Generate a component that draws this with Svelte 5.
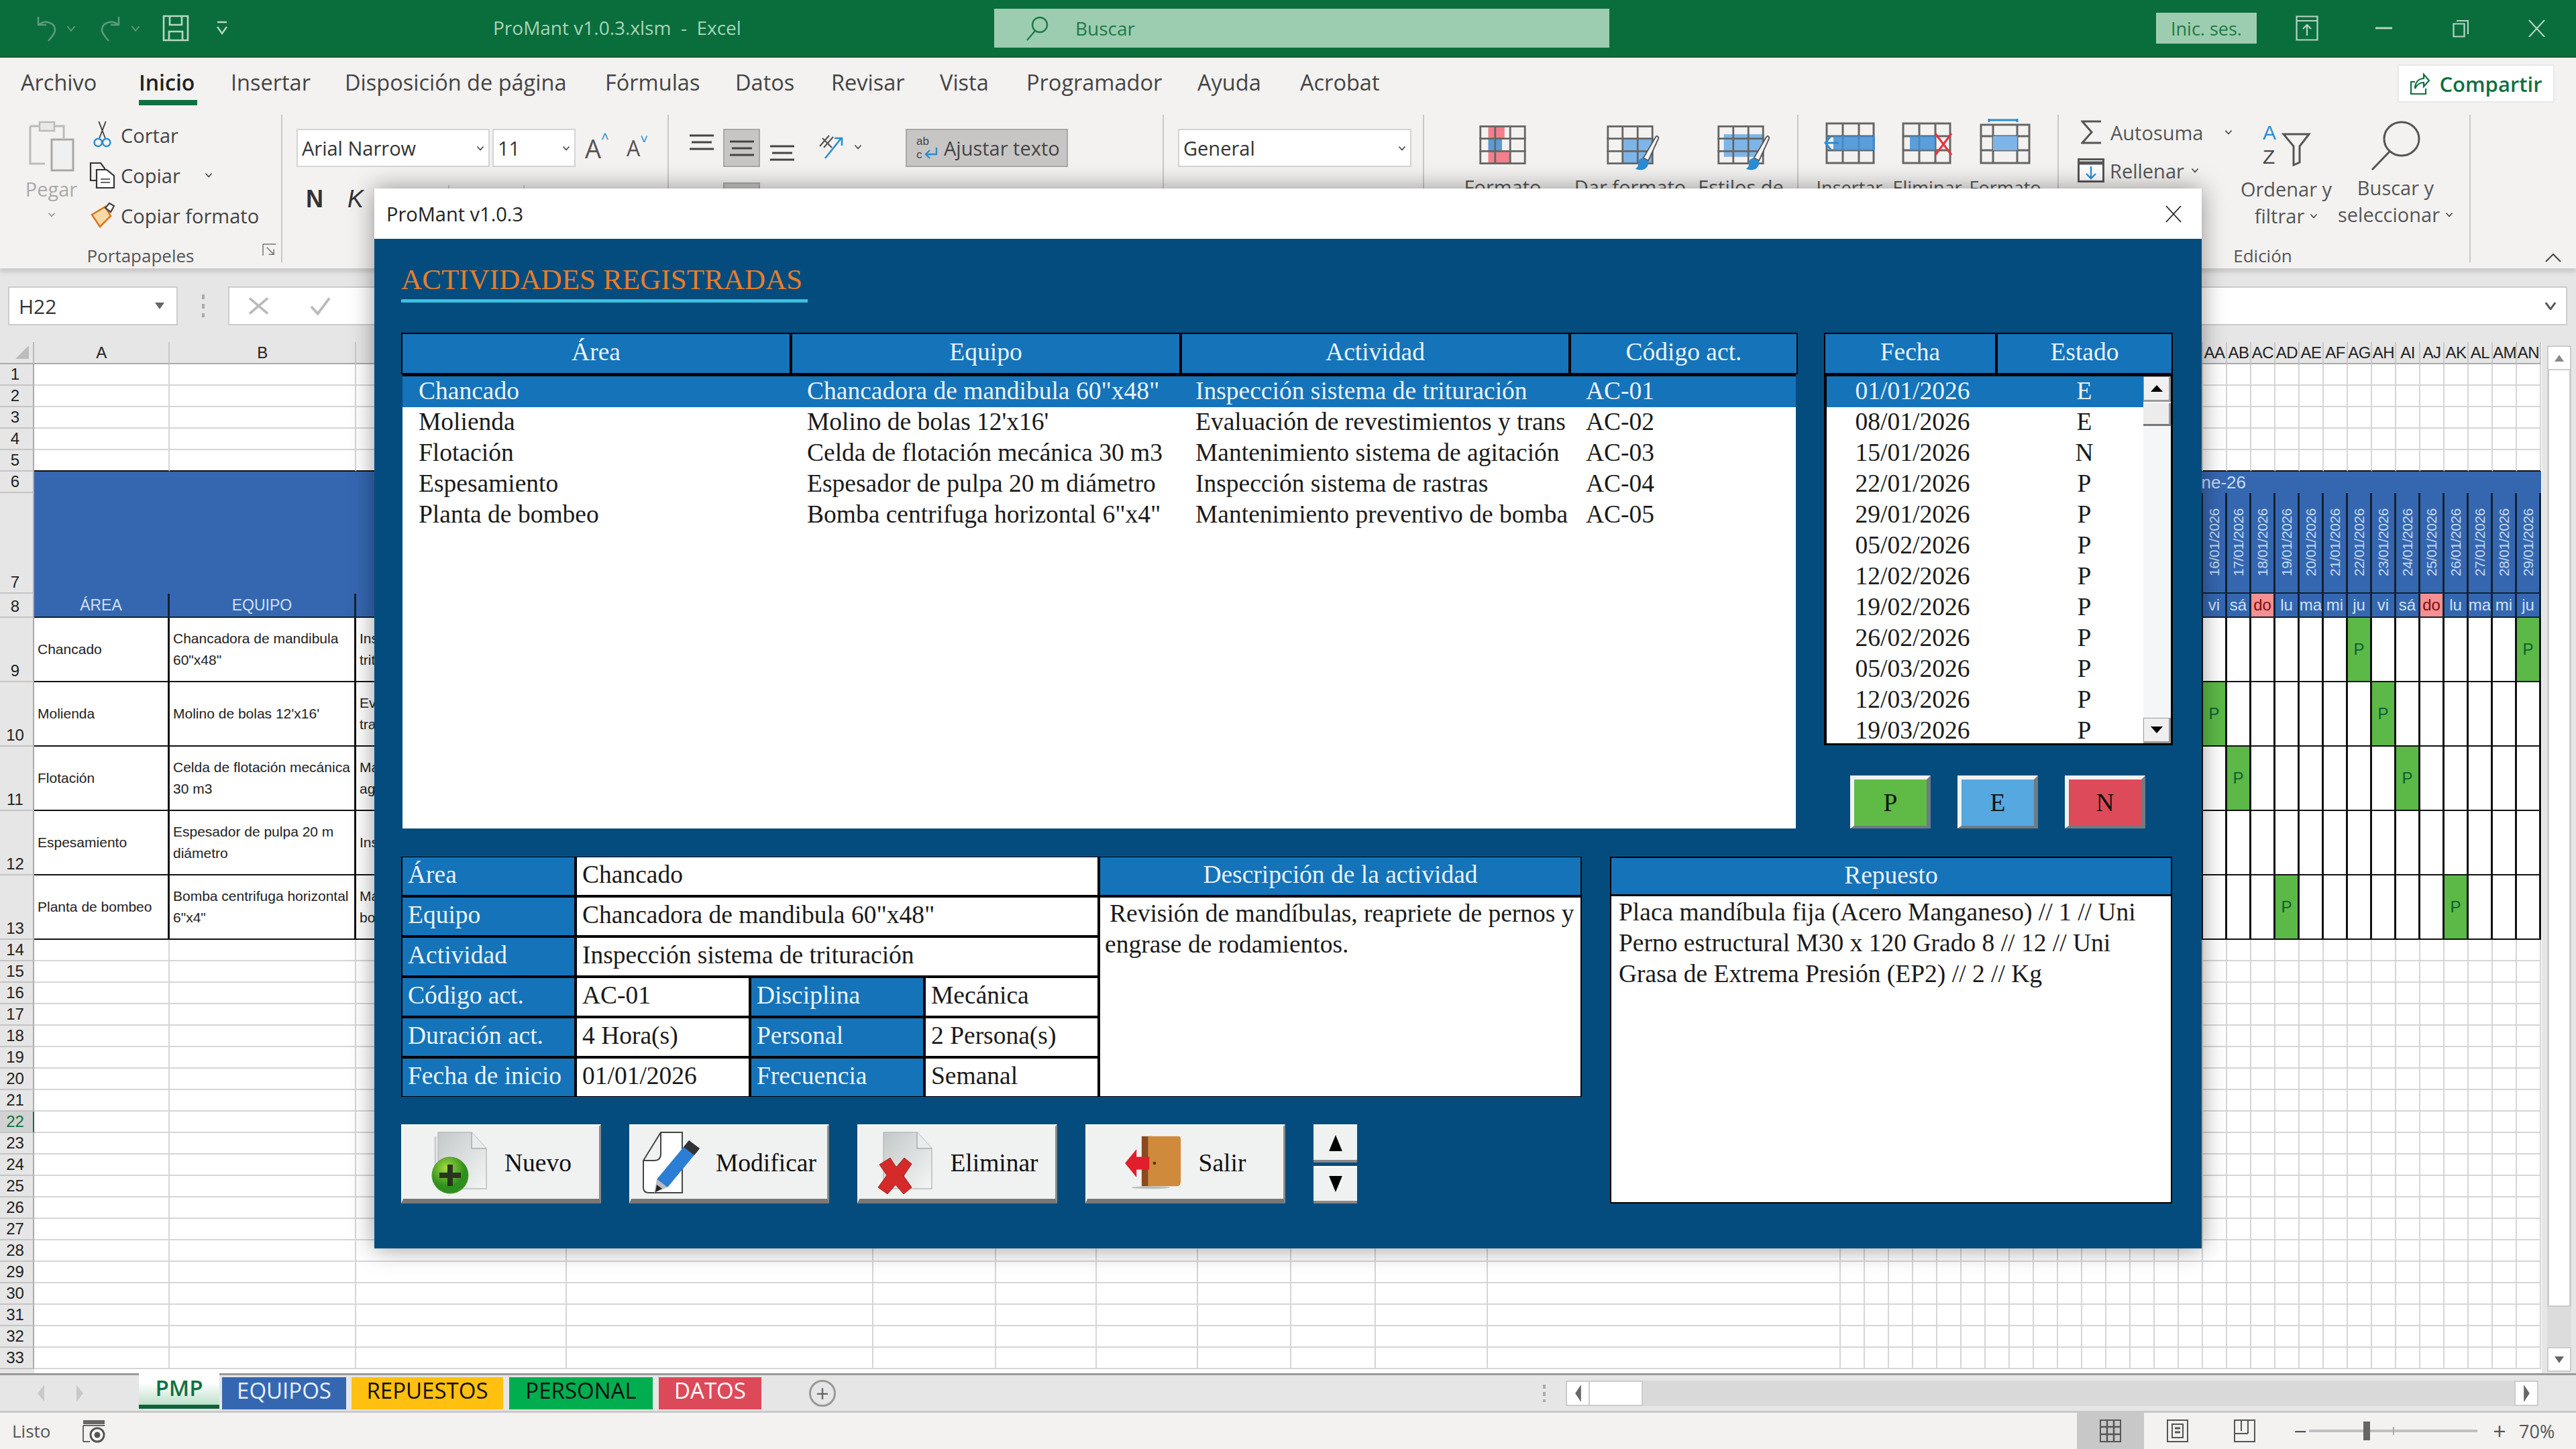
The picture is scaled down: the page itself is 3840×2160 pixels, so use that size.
<script>
  const cols = [202,278,314,457,183,150,151,139,126,167,526,...Array(29).fill(36)];
  const letters = ['A','B','C','D','E','F','G','H','I','J','K','L','M','N','O','P','Q','R','S','T','U','V','W','X','Y','Z','AA','AB','AC','AD','AE','AF','AG','AH','AI','AJ','AK','AL','AM','AN'];
  const rowH = r => r===7?150 : r===8?36 : (r>=9&&r<=13)?96 : r===34?6 : 32;
  const rows = Array.from({length:34},(_,i)=>i+1);
  const dayNames=['do','lu','ma','mi','ju','vi','sá'];
  const dates = Array.from({length:29},(_,i)=>{const d=new Date(2026,0,1+i);return {label:String(d.getDate()).padStart(2,'0')+'/01/2026',day:dayNames[d.getDay()]}});
  const tableData = [
    ['Chancado','Chancadora de mandibula 60"x48"','Inspección sistema de trituración'],
    ['Molienda',"Molino de bolas 12'x16'",'Evaluación de revestimientos y transmisión'],
    ['Flotación','Celda de flotación mecánica 30 m3','Mantenimiento sistema de agitación'],
    ['Espesamiento','Espesador de pulpa 20 m diámetro','Inspección sistema de rastras'],
    ['Planta de bombeo','Bomba centrifuga horizontal 6"x4"','Mantenimiento preventivo de bomba']
  ];
  const marks = {'9-32':'P','9-39':'P','10-26':'P','10-33':'P','11-27':'P','11-34':'P','13-29':'P','13-36':'P','9-25':'N'};
  const gridCols = '51px '+cols.map(c=>c+'px').join(' ');
  const gridRows = '33px '+rows.map(r=>rowH(r)+'px').join(' ');
  const visible = c => c<3 || c>=26;
  function cellClass(r,c){
    let k='cell';
    if(r>=6&&r<=8) k+=' blue';
    if(r===6) k+=' merged';
    if(r===7&&c<11) k+=' merged';
    if(r===7&&c>=11) k+=' dark';
    if(r===8) k+=' dark';
    if(r>=9&&r<=13) k+=' dark';
    if(r===5) k+=' bdark';
    if(r===13) k+=' bdark';
    if(r===34) k+=' nob';
    const m=marks[r+'-'+c];
    if(m==='P') k+=' p';
    if(m==='N') k+=' n';
    if(r===8&&c>=11&&dates[c-11].day==='do') k+=' sun';
    return k;
  }
  const mainRows = [
    ['Chancado','Chancadora de mandibula 60"x48"','Inspección sistema de trituración','AC-01'],
    ['Molienda',"Molino de bolas 12'x16'",'Evaluación de revestimientos y trans','AC-02'],
    ['Flotación','Celda de flotación mecánica 30 m3','Mantenimiento sistema de agitación','AC-03'],
    ['Espesamiento','Espesador de pulpa 20 m diámetro','Inspección sistema de rastras','AC-04'],
    ['Planta de bombeo','Bomba centrifuga horizontal 6"x4"','Mantenimiento preventivo de bomba','AC-05']
  ];
  const fechas = [['01/01/2026','E'],['08/01/2026','E'],['15/01/2026','N'],['22/01/2026','P'],['29/01/2026','P'],['05/02/2026','P'],['12/02/2026','P'],['19/02/2026','P'],['26/02/2026','P'],['05/03/2026','P'],['12/03/2026','P'],['19/03/2026','P']];
  const menu = [['Archivo',''],['Inicio','on'],['Insertar',''],['Disposición de página',''],['Fórmulas',''],['Datos',''],['Revisar',''],['Vista',''],['Programador',''],['Ayuda',''],['Acrobat','']];
  const sheets = [['PMP','s-pmp'],['EQUIPOS','s-eq'],['REPUESTOS','s-rep'],['PERSONAL','s-per'],['DATOS','s-dat']];
</script>

{#snippet chev()}
  <svg class="chev" viewBox="0 0 12 8"><path d="M1.5 1.5 6 6.5l4.5-5" fill="none" stroke="#444" stroke-width="1.6"/></svg>
{/snippet}

{#snippet tableIcon(kind)}
  <svg class="tblic" viewBox="0 0 74 62">
    {#if kind==='cond'}
      <rect x="14" y="0" width="26" height="22" fill="#f0808c"/><rect x="14" y="40" width="36" height="22" fill="#f0808c"/><rect x="14" y="22" width="22" height="18" fill="#5b9bd5"/>
    {:else if kind==='fmt'}
      <rect x="26" y="20" width="48" height="42" fill="#7db5e8"/>
    {:else if kind==='sty'}
      <rect x="10" y="14" width="64" height="36" fill="#7db5e8"/>
    {/if}
    <g fill="none" stroke="#666" stroke-width="3"><rect x="1.5" y="1.5" width="71" height="59"/><path d="M25 0v62M49 0v62M0 21h74M0 41h74"/></g>
    {#if kind!=='cond'}
      <path d="M78 18c2-2 5 0 4 3L66 56l-8-4z" fill="#f4f4f4" stroke="#555" stroke-width="2"/>
      <path d="M57 52l9 5c1 8-4 14-12 14-5 0-9-2-9-2 4-2 5-5 5-9 0-5 3-8 7-8z" fill="#2a8dd4"/>
    {/if}
  </svg>
{/snippet}

<div class="app">
  <header class="titlebar">
    <svg class="tb-undo" viewBox="0 0 36 40"><path d="M6 3v12h12M7 15c7-7 22-5 24 6 1 6-5 12-10 18" fill="none" stroke="#5d9b7c" stroke-width="2.5"/></svg>
    <svg class="tb-cv" viewBox="0 0 12 8"><path d="M1 1l5 6 5-6" fill="none" stroke="#5d9b7c" stroke-width="1.5"/></svg>
    <svg class="tb-redo" viewBox="0 0 36 40"><path d="M30 3v12H18M29 15c-7-7-22-5-24 6-1 6 5 12 10 18" fill="none" stroke="#5d9b7c" stroke-width="2.5"/></svg>
    <svg class="tb-cv" viewBox="0 0 12 8"><path d="M1 1l5 6 5-6" fill="none" stroke="#5d9b7c" stroke-width="1.5"/></svg>
    <svg class="tb-save" viewBox="0 0 40 40"><path d="M2 2h36v36H2zM11 2v13h18V2M10 38V25h20v13" fill="none" stroke="#b8d6c4" stroke-width="2.6"/></svg>
    <svg class="tb-cust" viewBox="0 0 18 22"><path d="M2 2h14M2 9l7 10 7-10" fill="none" stroke="#b8d6c4" stroke-width="2.4"/></svg>
    <span class="tb-title">ProMant v1.0.3.xlsm  -  Excel</span>
    <div class="search">
      <svg viewBox="0 0 36 38"><circle cx="22" cy="14" r="11" fill="none" stroke="#1e7a48" stroke-width="2.4"/><path d="M15 23 3 37" stroke="#1e7a48" stroke-width="2.4"/></svg>
      <span>Buscar</span>
    </div>
    <div class="signin">Inic. ses.</div>
    <svg class="wc wc1" viewBox="0 0 34 38"><path d="M1.5 1.5h31v35h-31zM1.5 8h31M17 30V14M11 20l6-6 6 6" fill="none" stroke="#b8d6c4" stroke-width="2.2"/></svg>
    <svg class="wc wc2" viewBox="0 0 26 6"><path d="M0 3h26" stroke="#b8d6c4" stroke-width="3"/></svg>
    <svg class="wc wc3" viewBox="0 0 24 28"><path d="M1.5 7.5h16v19h-16zM6 3h17v20" fill="none" stroke="#b8d6c4" stroke-width="2.2"/></svg>
    <svg class="wc wc4" viewBox="0 0 26 28"><path d="M1 1l24 26M25 1 1 27" stroke="#b8d6c4" stroke-width="2.2"/></svg>
  </header>

  <nav class="menu">
    {#each menu as [m,s]}<span class="mi m-{m.slice(0,3).toLowerCase()} {s}">{m}</span>{/each}
    <div class="share">
      <svg viewBox="0 0 30 34"><path d="M8 14H2v18h22v-8M8 24c0-9 5-15 13-15V3l8 9-8 9v-6c-6 0-10 3-13 9z" fill="none" stroke="#107040" stroke-width="2.2"/></svg>
      <span>Compartir</span>
    </div>
  </nav>

  <section class="ribbon">
    <div class="grp g-clip">
      <div class="paste">
        <svg class="pic" viewBox="0 0 68 76"><path d="M2 8h14M38 8h14v18M2 8v56h22" fill="none" stroke="#bbb" stroke-width="3"/><rect x="16" y="2" width="22" height="13" fill="#e8e8e8" stroke="#bbb" stroke-width="2.5"/><rect x="34" y="28" width="32" height="46" fill="#f0f0f0" stroke="#a8a8a8" stroke-width="3"/></svg>
        <span>Pegar</span>
        <svg class="chev" viewBox="0 0 12 8"><path d="M1.5 1.5 6 6.5l4.5-5" fill="none" stroke="#999" stroke-width="1.6"/></svg>
      </div>
      <div class="cliplist">
        <div><svg class="cic" viewBox="0 0 39 42"><path d="M14 0l10 26M25 0 15 26" stroke="#444" stroke-width="2"/><circle cx="13" cy="33" r="6" fill="none" stroke="#2a8dd4" stroke-width="2.6"/><circle cx="26" cy="33" r="6" fill="none" stroke="#2a8dd4" stroke-width="2.6"/></svg><span>Cortar</span></div>
        <div><svg class="cic" viewBox="0 0 39 40"><path d="M10 28H2V2h15l6 8v3" fill="none" stroke="#333" stroke-width="2.2"/><path d="M11 12h15l11 9v18H11z" fill="#fff" stroke="#333" stroke-width="2.2"/><path d="M17 26h14M17 31h14" stroke="#666" stroke-width="2"/></svg><span>Copiar</span>{@render chev()}</div>
        <div><svg class="cic" viewBox="0 0 39 38"><path d="M4 18 24 6l8 14-16 16z" fill="#f8d9a8" stroke="#d9761a" stroke-width="2.6"/><path d="M24 8l6-7 7 4-5 9z" fill="#fff" stroke="#444" stroke-width="2.2"/></svg><span>Copiar formato</span></div>
      </div>
      <div class="grplabel">Portapapeles
        <svg class="launch" viewBox="0 0 22 20"><path d="M1 1h20M1 1v18M7 6l11 11M18 9v8h-8" fill="none" stroke="#777" stroke-width="1.6"/></svg>
      </div>
    </div>

    <div class="grp g-font">
      <div class="fontrow">
        <div class="combo fontname"><span>Arial Narrow</span>{@render chev()}</div>
        <div class="combo fontsize"><span>11</span>{@render chev()}</div>
        <span class="grow">A<sup>˄</sup></span>
        <span class="shrink">A<sup>˅</sup></span>
      </div>
      <div class="fontrow2"><b>N</b><i>K</i><u class="fs1"></u><u class="fs2"></u></div>
    </div>

    <div class="grp g-align">
      <svg class="al al1" viewBox="0 0 36 24"><path d="M0 2h36M3 12h30M0 22h36" stroke="#444" stroke-width="3"/></svg>
      <div class="alcol">
        <div class="al-on"><svg viewBox="0 0 36 24"><path d="M0 2h36M3 12h30M0 22h36" stroke="#444" stroke-width="3"/></svg></div>
        <div class="al-on al-low"></div>
      </div>
      <svg class="al al3" viewBox="0 0 36 24"><path d="M0 2h36M3 12h30M0 22h36" stroke="#444" stroke-width="3"/></svg>
      <svg class="orient" viewBox="0 0 40 38"><path d="M2 18 16 2M8 20 22 4M6 6l14 14" stroke="#555" stroke-width="2.2"/><path d="M10 36 34 6M24 6h11v11" fill="none" stroke="#2a8dd4" stroke-width="2.6"/></svg>
      {@render chev()}
      <div class="wrap">
        <svg viewBox="0 0 34 38"><text x="0" y="14" font-size="17" fill="#444" font-family="Liberation Sans">ab</text><text x="0" y="34" font-size="17" fill="#444" font-family="Liberation Sans">c</text><path d="M30 18v10H14M20 22l-6 6 6 6" fill="none" stroke="#2a8dd4" stroke-width="2.4"/></svg>
        <span>Ajustar texto</span>
      </div>
    </div>

    <div class="grp g-num">
      <div class="combo general"><span>General</span>{@render chev()}</div>
    </div>

    <div class="grp g-styles">
      <div class="bigtool t1">{@render tableIcon('cond')}<span>Formato</span></div>
      <div class="bigtool t2">{@render tableIcon('fmt')}<span>Dar formato</span></div>
      <div class="bigtool t3">{@render tableIcon('sty')}<span>Estilos de</span></div>
    </div>

    <div class="grp g-cells">
      <div class="celltool">
        <svg viewBox="0 0 76 68"><g fill="none" stroke="#666" stroke-width="3"><rect x="4" y="7" width="70" height="59"/><path d="M28 7v59M52 7v59M4 26h70M4 47h70"/></g><rect x="14" y="26" width="62" height="21" fill="#3f8fd8" opacity=".85"/><path d="M22 36H2M10 26 2 36l8 10" fill="none" stroke="#2a8dd4" stroke-width="3"/></svg>
        <span>Insertar</span>
      </div>
      <div class="celltool">
        <svg viewBox="0 0 76 68"><g fill="none" stroke="#666" stroke-width="3"><rect x="2" y="7" width="70" height="59"/><path d="M26 7v59M50 7v59M2 26h70M2 47h70"/></g><rect x="12" y="26" width="38" height="21" fill="#3f8fd8" opacity=".85"/><path d="M50 22l24 32M74 22 50 54" stroke="#e8333c" stroke-width="3"/></svg>
        <span>Eliminar</span>
      </div>
      <div class="celltool">
        <svg viewBox="0 0 76 68"><path d="M14 2h42M14 0v5M56 0v5" stroke="#2a8dd4" stroke-width="3" fill="none"/><g fill="none" stroke="#666" stroke-width="3"><rect x="2" y="9" width="72" height="57"/><path d="M20 9v57M56 9v57M2 26h72M2 47h72"/></g><rect x="20" y="26" width="36" height="21" fill="#7db5e8"/></svg>
        <span>Formato</span>
      </div>
    </div>

    <div class="grp g-edit">
      <div class="editl">
        <div class="e1"><svg class="eic" viewBox="0 0 32 36"><path d="M30 2H2l14 16L2 34h28" fill="none" stroke="#555" stroke-width="3"/></svg><span>Autosuma</span>{@render chev()}</div>
        <div class="e2"><svg class="eic" viewBox="0 0 40 36"><rect x="1.5" y="1.5" width="37" height="33" fill="#fff" stroke="#555" stroke-width="3"/><path d="M1 7h38" stroke="#555" stroke-width="5"/><path d="M20 12v18M13 23l7 7 7-7" fill="none" stroke="#2a8dd4" stroke-width="2.4"/></svg><span>Rellenar</span>{@render chev()}</div>
      </div>
      <div class="sort">
        <svg class="sic" viewBox="0 0 72 66"><text x="1" y="26" font-size="30" fill="#2a8dd4" font-family="Liberation Sans">A</text><text x="1" y="62" font-size="30" fill="#444" font-family="Liberation Sans">Z</text><path d="M32 18h38L56 36v24l-9 4V36z" fill="none" stroke="#555" stroke-width="3"/></svg>
        <span class="ln1">Ordenar y</span>
        <span class="ln2">filtrar{@render chev()}</span>
      </div>
      <div class="find">
        <svg class="sic" viewBox="0 0 74 74"><ellipse cx="46" cy="27" rx="26" ry="25" fill="none" stroke="#555" stroke-width="3"/><path d="M28 46 2 73" stroke="#555" stroke-width="3"/></svg>
        <span class="ln1">Buscar y</span>
        <span class="ln2">seleccionar{@render chev()}</span>
      </div>
      <div class="grplabel edlabel">Edición</div>
    </div>

    <div class="g-last">
      <svg viewBox="0 0 24 14"><path d="M1 13 12 2l11 11" fill="none" stroke="#444" stroke-width="2"/></svg>
    </div>
  </section>

  <div class="formula">
    <div class="namebox"><span>H22</span><svg viewBox="0 0 14 10"><path d="M0 0h14L7 10z" fill="#666"/></svg></div>
    <div class="fdots"></div>
    <div class="fbox">
      <svg class="fx" viewBox="0 0 34 28"><path d="M2 2l28 24M30 2 2 26" stroke="#bbb" stroke-width="4"/></svg>
      <svg class="fc" viewBox="0 0 34 28"><path d="M3 15l10 11L31 2" fill="none" stroke="#bbb" stroke-width="4"/></svg>
      <span class="fchev"><svg viewBox="0 0 14 10"><path d="M1 1l6 8 6-8" fill="none" stroke="#555" stroke-width="2.5"/></svg></span>
    </div>
  </div>

  <div class="sheet">
    <div class="grid" style="grid-template-columns:{gridCols};grid-template-rows:{gridRows}">
      <div class="corner"><svg viewBox="0 0 20 20"><path d="M20 0v20H0z" fill="#bdbdbd"/></svg></div>
      {#each letters as l,c}<div class="colh">{visible(c)?l:''}</div>{/each}
      {#each rows as r}
        <div class="rowh" class:sel={r===22} class:nob={r===34}>{r<34?r:''}</div>
        {#each letters as l,c}
          <div class={cellClass(r,c)}>
            {#if r===6&&c===25}<span class="mes">ene-26</span>{/if}
            {#if r===7&&c>=26}<span class="vdate">{dates[c-11].label}</span>{/if}
            {#if r===8&&c===0}ÁREA{/if}
            {#if r===8&&c===1}EQUIPO{/if}
            {#if r===8&&c>=26}<span class="day">{dates[c-11].day}</span>{/if}
            {#if r>=9&&r<=13&&c<3}<span class="txt">{tableData[r-9][c]}</span>{/if}
            {#if marks[r+'-'+c]==='P'}<span>P</span>{/if}
          </div>
        {/each}
      {/each}
    </div>
    <div class="vscroll">
      <div class="vb"><svg viewBox="0 0 14 10"><path d="M7 0l7 10H0z" fill="#888"/></svg></div>
      <div class="vthumb"></div>
      <div class="vtrack"></div>
      <div class="vb"><svg viewBox="0 0 14 10"><path d="M7 10 14 0H0z" fill="#666"/></svg></div>
    </div>
  </div>

  <div class="tabsbar">
    <svg class="nav n1" viewBox="0 0 12 30"><path d="M12 0v30L0 15z" fill="#c8c8c8"/></svg>
    <svg class="nav n2" viewBox="0 0 12 30"><path d="M0 0v30l12-15z" fill="#c8c8c8"/></svg>
    <div class="stabs">
      {#each sheets as [s,k]}<div class="stab {k}">{s}</div>{/each}
    </div>
    <div class="addsheet">+</div>
    <div class="hdots"></div>
    <div class="hscroll">
      <div class="hb"><svg viewBox="0 0 10 30"><path d="M10 0v30L0 15z" fill="#666"/></svg></div>
      <div class="hthumb"></div>
      <div class="htrack"></div>
      <div class="hb"><svg viewBox="0 0 10 30"><path d="M0 0v30l10-15z" fill="#666"/></svg></div>
    </div>
  </div>

  <footer class="status">
    <span class="listo">Listo</span>
    <svg class="macro" viewBox="0 0 36 36"><rect x="2" y="2" width="32" height="6" fill="#666"/><path d="M2 10h32M2 34h10M2 10v24" fill="none" stroke="#666" stroke-width="2"/><circle cx="23" cy="24" r="10" fill="#fff" stroke="#555" stroke-width="3"/><circle cx="23" cy="24" r="4.5" fill="#555"/></svg>
    <div class="view on"><svg viewBox="0 0 32 34"><rect x="1" y="1" width="30" height="32" fill="none" stroke="#555" stroke-width="2"/><path d="M11 1v32M21 1v32M1 11h30M1 22h30" stroke="#555" stroke-width="2.5"/></svg></div>
    <div class="view"><svg viewBox="0 0 32 34"><rect x="1" y="1" width="30" height="32" fill="none" stroke="#555" stroke-width="2"/><rect x="8" y="7" width="16" height="20" fill="none" stroke="#555" stroke-width="2"/><path d="M12 13h8M12 19h8" stroke="#555" stroke-width="3"/></svg></div>
    <div class="view"><svg viewBox="0 0 32 34"><rect x="1" y="1" width="30" height="32" fill="none" stroke="#555" stroke-width="2"/><path d="M11 1v16M21 1v20M1 21h20" stroke="#555" stroke-width="2"/></svg></div>
    <span class="zm">−</span>
    <div class="slider"><i class="tick"></i><i class="knob"></i></div>
    <span class="zm">+</span>
    <span class="pct">70%</span>
  </footer>

  <div class="dialog">
    <div class="dlgtitle">
      <span>ProMant v1.0.3</span>
      <svg viewBox="0 0 24 26"><path d="M1 1l22 24M23 1 1 25" stroke="#222" stroke-width="1.8"/></svg>
    </div>
    <div class="dlgbody">
      <h1>ACTIVIDADES REGISTRADAS</h1>
      <div class="toprow">
        <div class="mainlist">
          <div class="lhead main">
            <div>Área</div><div>Equipo</div><div>Actividad</div><div>Código act.</div>
          </div>
          <div class="lbody">
            {#each mainRows as row,i}
              <div class="lrow" class:selrow={i===0}>{#each row as c}<span>{c}</span>{/each}</div>
            {/each}
          </div>
        </div>
        <div class="side">
          <div class="fechalist">
            <div class="lhead two"><div>Fecha</div><div>Estado</div></div>
            <div class="fbody">
              <div class="frows">
                {#each fechas as [f,e],i}
                  <div class="frow" class:selrow={i===0}><span>{f}</span><span>{e}</span></div>
                {/each}
              </div>
              <div class="lscroll">
                <div class="lsb"><svg viewBox="0 0 18 10"><path d="M9 0l9 10H0z" fill="#000"/></svg></div>
                <div class="lsthumb"></div>
                <div class="lsfill"></div>
                <div class="lsb"><svg viewBox="0 0 18 10"><path d="M9 10 18 0H0z" fill="#000"/></svg></div>
              </div>
            </div>
          </div>
          <div class="pen">
            <button class="pp">P</button><button class="pe">E</button><button class="pn">N</button>
          </div>
        </div>
      </div>
      <div class="botrow">
        <div class="leftcol">
          <div class="form">
            <div class="lb">Área</div><div class="vl span3">Chancado</div><div class="lb ctr">Descripción de la actividad</div>
            <div class="lb">Equipo</div><div class="vl span3">Chancadora de mandibula 60"x48"</div>
            <div class="descbox"><div class="d1">Revisión de mandíbulas, reapriete de pernos y</div><div>engrase de rodamientos.</div></div>
            <div class="lb">Actividad</div><div class="vl span3">Inspección sistema de trituración</div>
            <div class="lb">Código act.</div><div class="vl">AC-01</div><div class="lb">Disciplina</div><div class="vl">Mecánica</div>
            <div class="lb">Duración act.</div><div class="vl">4 Hora(s)</div><div class="lb">Personal</div><div class="vl">2 Persona(s)</div>
            <div class="lb">Fecha de inicio</div><div class="vl">01/01/2026</div><div class="lb">Frecuencia</div><div class="vl">Semanal</div>
          </div>
          <div class="actions">
            <button class="act">
              <svg viewBox="0 0 84 94"><defs><linearGradient id="gd" x1="0" y1="0" x2="1" y2="1"><stop offset="0" stop-color="#c4c8c8"/><stop offset="1" stop-color="#f4f6f6"/></linearGradient><radialGradient id="gg" cx=".4" cy=".3"><stop offset="0" stop-color="#a8dc3c"/><stop offset="1" stop-color="#2f8f1e"/></radialGradient></defs>
                <path d="M10 2h50l22 24v60H10z" fill="url(#gd)" stroke="#b8bcbc" stroke-width="1.5"/><path d="M60 2v24h22" fill="#e8ecec" stroke="#a8acac" stroke-width="1.5"/><path d="M6 8v60" stroke="#ccc" stroke-width="3"/>
                <circle cx="28" cy="66" r="27" fill="url(#gg)" stroke="#4c9a20"/><path d="M28 50v32M12 66h32" stroke="#26361c" stroke-width="8"/></svg>
              <span>Nuevo</span>
            </button>
            <button class="act">
              <svg viewBox="0 0 86 94"><path d="M2 44 28 2h32v90H10q-8 0-8-8zM2 44h16q10 0 10-10V2" fill="#fff" stroke="#444" stroke-width="2"/><path d="M70 14 86 26 38 84 22 72z" fill="#2b7ed4"/><path d="M70 14 86 26 78 36 62 24z" fill="#333"/><path d="M22 72l16 12-20 8z" fill="#bbb"/><path d="M22 80l8 6-10 5z" fill="#222"/></svg>
              <span>Modificar</span>
            </button>
            <button class="act">
              <svg viewBox="0 0 84 94"><path d="M10 2h50l22 24v60H10z" fill="url(#gd)" stroke="#b8bcbc" stroke-width="1.5"/><path d="M60 2v24h22" fill="#e8ecec" stroke="#a8acac" stroke-width="1.5"/><path d="M4 50 20 40l9 14 12-14 11 9-12 18 12 17-12 10-12-14-12 14L2 84l13-18z" fill="#d42a2a" stroke="#a81c1c"/></svg>
              <span>Eliminar</span>
            </button>
            <button class="act">
              <svg viewBox="0 0 90 82"><rect x="26" y="0" width="16" height="78" fill="#8c4a1c"/><path d="M36 2q0-2 3-2h44q4 0 4 4v66q0 8-6 8H36z" fill="#d08a3c"/><circle cx="46" cy="42" r="2.5" fill="#5a3010"/><path d="M38 32H18V20L0 42l18 22V52h20z" fill="#e01e2c"/><ellipse cx="40" cy="80" rx="30" ry="2" fill="#bbb"/></svg>
              <span>Salir</span>
            </button>
            <div class="spin">
              <div><svg viewBox="0 0 28 34"><path d="M14 0l14 34H0z" fill="#000"/></svg></div>
              <div><svg viewBox="0 0 28 34"><path d="M14 34 28 0H0z" fill="#000"/></svg></div>
            </div>
          </div>
        </div>
        <div class="repuesto">
          <div class="rhead">Repuesto</div>
          <div class="rbody">
            <div>Placa mandíbula fija (Acero Manganeso) // 1 // Uni</div>
            <div>Perno estructural M30 x 120 Grado 8 // 12 // Uni</div>
            <div>Grasa de Extrema Presión (EP2) // 2 // Kg</div>
          </div>
        </div>
      </div>
    </div>
  </div>
</div>

<style>
  :global(body){margin:0;background:#e6e6e6}
  .app{width:3840px;height:2160px;position:relative;overflow:hidden;display:flex;flex-direction:column;font-family:"Open Sans","Liberation Sans",sans-serif;color:#333;background:#f3f2f1}
  svg{display:block;flex:none}

  .titlebar{height:86px;flex:none;background:#0a6e3c;display:flex;align-items:center;box-sizing:border-box;border-bottom:2px solid #0e5f35}
  .tb-undo{width:36px;height:40px;margin-left:51px}
  .tb-redo{width:36px;height:40px;margin-left:34px}
  .tb-cv{width:14px;height:9px;margin-left:12px}
  .tb-save{width:40px;height:40px;margin-left:33px}
  .tb-cust{width:18px;height:22px;margin-left:40px}
  .tb-title{margin-left:395px;font-size:28px;color:#a8d4ba;white-space:pre;width:747px;padding-bottom:3px}
  .search{width:917px;height:58px;background:#9dcdb0;display:flex;align-items:center;font-size:28px;color:#1e7a48}
  .search svg{width:36px;height:38px;margin-left:46px}
  .search span{margin-left:39px}
  .signin{margin-left:815px;width:150px;height:46px;background:#9dcdb0;color:#1e7a48;font-size:27px;display:flex;align-items:center;justify-content:center}
  .wc{height:auto}
  .wc1{width:34px;margin-left:58px}
  .wc2{width:25px;margin-left:85px}
  .wc3{width:24px;margin-left:90px}
  .wc4{width:25px;margin-left:89px}

  .menu{height:85px;flex:none;box-sizing:border-box;padding-bottom:12px;display:flex;align-items:center;position:relative;background:#f3f2f1;font-size:32.5px}
  .mi{color:#444;position:relative;white-space:nowrap}
  .mi.on{color:#222;font-weight:600}
  .mi.on::after{content:"";position:absolute;left:0;right:0;bottom:-13px;height:8px;background:#107040}
  .m-arc{margin-left:31px;width:176px}
  .m-ini{width:87px;margin-right:50px;font-size:32px}
  .m-ins{width:170px}
  .m-dis{width:388px}
  .m-fór{width:194px}
  .m-dat{width:143px}
  .m-rev{width:162px}
  .m-vis{width:129px}
  .m-pro{width:255px}
  .m-ayu{width:153px}
  .m-acr{width:200px}
  .share{margin:4px 0 0 1436px;width:234px;height:57px;background:#fff;border:2px solid #e8e8e8;box-sizing:border-box;display:flex;align-items:center;justify-content:center;gap:14px;color:#107040;font-weight:600;font-size:31px}
  .share svg{width:30px;height:34px}

  .ribbon{height:229px;flex:none;display:flex;background:#f3f2f1;box-shadow:0 6px 6px rgba(0,0,0,.12);position:relative;z-index:2;font-size:29px;color:#444}
  .grp{height:220px;box-sizing:border-box;position:relative;border-right:2px solid #c8c8c8;flex:none}
  .grplabel{position:absolute;left:0;right:0;top:190px;text-align:center;font-size:26px;color:#555;height:40px;line-height:40px}
  .chev{width:12px;height:8px}
  .g-clip{width:421px;display:flex}
  .paste{width:133px;display:flex;flex-direction:column;align-items:center;color:#aaa;padding-left:20px;box-sizing:border-box}
  .pic{width:68px;height:76px;margin-top:9px}
  .paste span{margin-top:6px;height:40px;line-height:40px}
  .paste .chev{margin-top:14px}
  .cliplist{display:flex;flex-direction:column;margin-top:0}
  .cliplist>div{height:60px;display:flex;align-items:center;white-space:nowrap}
  .cic{width:39px;height:40px;margin-right:8px}
  .cliplist .chev{margin-left:36px}
  .launch{position:absolute;left:391px;top:2px;width:21px;height:19px}

  .g-font{width:576px}
  .fontrow{display:flex;align-items:center;margin-top:21px;margin-left:21px;gap:4px}
  .combo{height:57px;box-sizing:border-box;background:#fff;border:2px solid #d4d4d4;display:flex;align-items:center;justify-content:space-between;padding:0 6px;color:#333;font-size:29px}
  .fontname{width:288px}
  .fontsize{width:124px}
  .grow,.shrink{font-size:38px;color:#555;margin-left:10px;width:44px;display:flex}
  .grow sup,.shrink sup{font-size:20px;color:#2a8dd4;line-height:1;margin-top:-2px}
  .shrink{font-size:32px;margin-left:14px}
  .fontrow2{display:flex;margin:27px 0 0 35px;font-size:36px;color:#333;font-family:"Liberation Sans",sans-serif}
  .fontrow2 i{margin-left:36px}
  .fontrow2 u{width:2px;height:20px;background:#c8c8c8;text-decoration:none}
  .fs1{margin-left:126px}
  .fs2{margin-left:110px}

  .g-align{width:738px;display:flex;align-items:flex-start}
  .al{width:36px;height:24px}
  .al1{margin:29px 0 0 31px}
  .alcol{margin:21px 0 0 14px}
  .al-on{width:55px;height:57px;box-sizing:border-box;background:#c8c6c4;border:2px solid #a8a8a8;display:flex;align-items:center;justify-content:center}
  .al-on svg{width:36px;height:24px}
  .al-low{margin-top:23px;height:30px}
  .al3{margin:45px 0 0 15px}
  .orient{width:40px;height:38px;margin:29px 0 0 36px}
  .g-align>.chev{margin:44px 0 0 13px}
  .wrap{width:242px;height:57px;box-sizing:border-box;margin:21px 0 0 65px;background:#c8c6c4;border:2px solid #a8a8a8;display:flex;align-items:center;font-size:29px;color:#444;padding-left:14px;gap:7px;white-space:nowrap}
  .wrap svg{width:34px;height:38px}

  .g-num{width:388px}
  .general{width:348px;margin:21px 0 0 21px}

  .g-styles{width:558px;display:flex}
  .bigtool{display:flex;flex-direction:column;align-items:center;width:190px;flex:none;font-size:29px;white-space:nowrap;color:#555}
  .tblic{width:72px;height:58px;margin-top:16px;overflow:visible}
  .bigtool span{margin-top:14px}
  .t1{margin-left:22px}
  .t3{margin-left:-25px}

  .g-cells{width:388px;display:flex;padding-left:18px;box-sizing:border-box}
  .celltool{width:116px;display:flex;flex-direction:column;align-items:center;flex:none;font-size:27px;white-space:nowrap;color:#555}
  .celltool svg{width:76px;height:68px;margin-top:6px}
  .celltool span{margin-top:16px}

  .g-edit{width:614px;display:flex;font-size:29px;color:#555;padding-left:28px;box-sizing:border-box}
  .editl{width:254px;flex:none}
  .e1,.e2{display:flex;align-items:center;white-space:nowrap}
  .e1{height:40px;margin-top:6px}
  .e1 .eic{width:32px;height:36px;margin-left:5px}
  .e1 span{margin-left:12px}
  .e1 .chev{margin-left:32px}
  .e2{height:40px;margin-top:17px}
  .e2 .eic{width:40px;height:36px}
  .e2 span{margin-left:8px}
  .e2 .chev{margin-left:10px}
  .sort,.find{display:flex;flex-direction:column;align-items:center;white-space:nowrap;flex:none}
  .sort{width:170px;margin-left:-28px}
  .sort .sic{width:72px;height:66px;margin-top:11px;overflow:visible}
  .find{width:190px;margin-left:-17px}
  .find .sic{width:74px;height:74px;margin-top:9px}
  .sort .ln1{margin-top:14px;line-height:40px}
  .find .ln1{margin-top:6px;line-height:40px}
  .ln2{line-height:40px;display:flex;align-items:center;gap:8px}
  .edlabel{left:250px;right:auto;width:108px}
  .g-last{flex:1;position:relative}
  .g-last svg{position:absolute;left:111px;top:206px;width:24px;height:14px}

  .formula{height:110px;flex:none;background:#e6e6e6;display:flex;align-items:center;padding-top:2px;box-sizing:border-box}
  .namebox{width:253px;height:58px;margin-left:12px;background:#fff;border:2px solid #ccc;box-sizing:border-box;display:flex;align-items:center;justify-content:space-between;padding:0 18px 0 14px;font-size:30px}
  .namebox svg{width:14px;height:10px}
  .fdots{width:4px;height:34px;margin-left:36px;background:repeating-linear-gradient(#aaa 0 7px,transparent 7px 14px)}
  .fbox{margin-left:35px;width:3487px;height:58px;background:#fff;border:2px solid #ccc;box-sizing:border-box;display:flex;align-items:center}
  .fx{width:33px;height:28px;margin-left:28px}
  .fc{width:33px;height:28px;margin-left:58px}
  .fchev{margin-left:auto;margin-right:14px}
  .fchev svg{width:18px;height:12px}

  .sheet{height:1537px;flex:none;display:flex;background:#e6e6e6;font-family:"Liberation Sans",sans-serif}
  .grid{display:grid;width:3789px;flex:none;background:#fff;overflow:hidden}
  .corner{background:#e6e6e6;border-right:2px solid #bbb;border-bottom:2px solid #aaa;box-sizing:border-box;display:flex;align-items:flex-end;justify-content:flex-end;padding:0 6px 6px 0}
  .corner svg{width:20px;height:20px}
  .colh{background:#e6e6e6;border-right:2px solid #c8c8c8;border-bottom:2px solid #aaa;box-sizing:border-box;text-align:center;line-height:32px;font-size:24px;color:#222;overflow:hidden;white-space:nowrap;letter-spacing:-.5px}
  .rowh{background:#e6e6e6;border-right:2px solid #aaa;border-bottom:2px solid #c4c4c4;box-sizing:border-box;font-size:24px;color:#222;display:flex;align-items:flex-end;justify-content:center;line-height:30px;padding-right:4px}
  .rowh.sel{background:#d2d2d2;color:#107040;border-right-color:#107040}
  .nob{border:none!important}
  .cell{border-right:2px solid #d6d6d6;border-bottom:2px solid #d6d6d6;box-sizing:border-box;font-size:21px;color:#222;display:flex;align-items:center;min-width:0;position:relative;overflow:hidden}
  .cell.bdark{border-bottom:2px solid #111}
  .cell.blue{background:#3567b1;color:#cfe0f5;justify-content:center;border-bottom:2px solid #123;border-right:3px solid #123;font-size:23px}
  .cell.merged{border-right-color:#3567b1;border-bottom-color:#3567b1;overflow:visible}
  .cell.dark{border-right:3px solid #111;border-bottom:2px solid #111}
  .cell.blue.dark{border-right-color:#123;border-bottom-color:#123}
  .cell.p{background:#5cb947;color:#0a6030;justify-content:center;font-size:24px}
  .cell.n{background:#dc4a5a}
  .cell.sun .day{background:#f48f92;color:#7a1010;display:flex;width:100%;height:100%;align-items:center;justify-content:center}
  .txt{padding:0 2px 0 5px;line-height:32px}
  .mes{position:absolute;left:19px;top:0;line-height:32px;font-size:26px;color:#c8dcf2;white-space:nowrap;z-index:3}
  .vdate{writing-mode:vertical-rl;transform:rotate(180deg);font-size:21px;color:#c5d8f0;letter-spacing:-.4px;white-space:nowrap}
  .day{font-size:24px;color:#cfe0f5}

  .vscroll{width:51px;flex:none;padding:5px 7px 2px 8px;box-sizing:border-box;display:flex;flex-direction:column;height:1537px;background:#e6e6e6}
  .vb{height:37px;background:#fff;border:2px solid #ccc;box-sizing:border-box;display:flex;align-items:center;justify-content:center;flex:none}
  .vb svg{width:14px;height:10px}
  .vthumb{height:1396px;flex:none;background:#fff;border:solid #ccc;border-width:0 3px 2px 3px;box-sizing:border-box}
  .vtrack{flex:1;background:#dcdcdc}

  .tabsbar{height:59px;flex:none;background:#e6e6e6;border-top:3px solid #999;border-bottom:3px solid #c8c8c8;box-sizing:border-box;display:flex;align-items:center;position:relative;font-size:33px}
  .nav{width:10px;height:30px}
  .n1{margin-left:56px}
  .n2{margin-left:48px}
  .stabs{margin-left:83px;display:flex;align-self:flex-start;height:53px;gap:4px}
  .stab{display:flex;align-items:center;justify-content:center;box-sizing:border-box;height:48px;margin-top:3px;padding-bottom:8px;color:#111;white-space:nowrap;line-height:36px}
  .s-pmp{width:120px;height:53px;margin-top:-3px;background:linear-gradient(#fff 30%,#bfe0cd);color:#107040;font-weight:600;border-bottom:6px solid #0e6238;padding-bottom:3px}
  .s-eq{width:185px;background:#3567b1;color:#e8f0fa;margin-right:4px}
  .s-rep{width:226px;background:#ffc010;margin-right:5px}
  .s-per{width:214px;background:#00ae50;margin-right:5px}
  .s-dat{width:153px;background:#dc4a5a;color:#fff}
  .addsheet{margin-left:71px;width:40px;height:40px;border:3px solid #999;border-radius:50%;box-sizing:border-box;display:flex;align-items:center;justify-content:center;color:#666;font-size:34px;line-height:1;background:#e6e6e6}
  .hdots{width:4px;height:26px;margin-left:1054px;background:repeating-linear-gradient(#aaa 0 6px,transparent 6px 11px)}
  .hscroll{margin-left:30px;display:flex;height:38px}
  .hb{width:36px;background:#fff;border:2px solid #ccc;box-sizing:border-box;display:flex;align-items:center;justify-content:center}
  .hb svg{width:9px;height:26px}
  .hthumb{width:79px;background:#fff;border:2px solid #ccc;box-sizing:border-box;border-left:none}
  .htrack{width:1299px;background:#d9d9d9}

  .status{height:54px;flex:none;background:#f3f2f1;display:flex;align-items:center;font-size:26px;color:#555}
  .listo{margin-left:18px;width:104px}
  .macro{width:36px;height:36px}
  .view{width:100px;height:54px;display:flex;align-items:center;justify-content:center;flex:none}
  .view svg{width:32px;height:34px}
  .view.on{background:#c8c8c8;margin-left:2938px}
  .zm{font-size:34px;color:#555;margin-left:20px;width:26px;text-align:center}
  .slider{width:251px;height:4px;background:#c0c0c0;position:relative}
  .slider .tick{position:absolute;left:125px;top:-4px;width:2px;height:12px;background:#aaa}
  .slider .knob{position:absolute;left:81px;top:-12px;width:10px;height:28px;background:#666}
  .pct{margin-left:16px;font-size:27px;color:#555}

  .dialog{position:absolute;left:558px;top:281px;width:2724px;height:1580px;z-index:5;background:#044c7e;box-shadow:0 0 34px rgba(0,0,0,.4);display:flex;flex-direction:column}
  .dlgtitle{height:75px;flex:none;background:#fff;display:flex;align-items:center;justify-content:space-between;padding:0 30px 0 18px;font-size:29px;color:#222}
  .dlgtitle svg{width:24px;height:26px}
  .dlgbody{flex:1;padding:0 0 0 40px;font-family:"Liberation Serif",serif;color:#111;font-size:37.5px;min-height:0}
  h1{margin:40px 0 0;display:block;width:fit-content;font-weight:400;font-size:43px;height:50px;line-height:42px;box-sizing:content-box;color:#e87d2a;border-bottom:5px solid #3bc0e0;padding-right:8px;letter-spacing:.1px}
  .toprow{display:flex;margin-top:45px;height:740px}
  .mainlist{width:2082px;flex:none;height:739px;display:flex;flex-direction:column}
  .lhead{display:grid;gap:4px;background:#000;padding:2px;height:62px;box-sizing:border-box;flex:none;color:#eaf3fa}
  .lhead>div{background:#1573ba;display:flex;align-items:center;justify-content:center;padding-bottom:6px;box-sizing:border-box}
  .lhead.main{grid-template-columns:577px 577px 576px 1fr}
  .lhead.two{grid-template-columns:253px 1fr}
  .lbody{flex:1;background:#fff;margin:0 3px 0 2px;border-top:3px solid #000;min-height:0}
  .lrow{display:grid;grid-template-columns:579px 579px 582px 1fr;height:46px;line-height:44px;padding-left:24px;white-space:nowrap;color:#1a1a1a}
  .selrow{background:#1573ba;color:#eaf3fa!important}
  .side{width:520px;flex:none;margin-left:39px;display:flex;flex-direction:column}
  .fechalist{height:615px;display:flex;flex-direction:column;flex:none}
  .fbody{flex:1;display:flex;background:#fff;border:solid #000;border-width:3px 3px 3px 4px;min-height:0}
  .frows{width:472px;flex:none;overflow:hidden}
  .frow{display:grid;grid-template-columns:256px 256px;height:46px;line-height:44px;text-align:center;color:#1a1a1a}
  .lscroll{flex:1;display:flex;flex-direction:column;background:#f4f6f8;gap:2px}
  .lsb{height:38px;flex:none;background:#f0f0f0;box-sizing:border-box;border:solid #999;border-width:1px 3px 3px 1px;display:flex;align-items:center;justify-content:center}
  .lsb svg{width:18px;height:10px}
  .lsthumb{height:34px;flex:none;background:#ececec;box-sizing:border-box;border-bottom:3px solid #777;border-right:3px solid #999}
  .lsfill{flex:1}
  .pen{display:flex;gap:40px;margin:45px 0 0 39px}
  .pen button{width:120px;height:79px;font:inherit;color:#111;padding:0;border:solid;border-width:6px 6px 4px 6px;border-color:#f2f2f2 #6e7b85 #6e7b85 #f2f2f2}
  .pp{background:#5fba46}
  .pe{background:#56a8e0}
  .pn{background:#dd4a5a}
  .botrow{display:flex;margin-top:41px}
  .leftcol{width:1760px;flex:none}
  .form{display:grid;grid-template-columns:256px 256px 256px 256px 716px;grid-template-rows:repeat(6,56px);gap:4px;background:#000;padding:1px 2px;width:1760px;box-sizing:border-box;height:358px}
  .lb{background:#1573ba;color:#eaf3fa;padding:0 0 6px 8px;display:flex;align-items:center;white-space:nowrap;box-sizing:border-box}
  .lb.ctr{justify-content:center;padding:0 0 6px}
  .vl{background:#fff;padding:0 0 6px 8px;display:flex;align-items:center;white-space:nowrap;color:#1a1a1a;box-sizing:border-box}
  .span3{grid-column:span 3}
  .descbox{grid-column:5;grid-row:2/7;background:#fff;padding:1px 0 0 7px;line-height:46px;white-space:nowrap;overflow:hidden;color:#1a1a1a}
  .d1{padding-left:7px}
  .actions{display:flex;gap:42px;margin-top:41px}
  .act{width:298px;height:118px;font:inherit;color:#111;background:#f0f2f2;border:solid;border-width:3px 3px 7px 3px;border-color:#fafafa #8a8a8a #777 #f4f4f4;padding:0;display:flex;align-items:center;justify-content:center;gap:24px;box-sizing:border-box}
  .act svg{width:86px;height:94px}
  .spin{width:65px;height:118px;display:flex;flex-direction:column;gap:5px}
  .spin div{flex:1;background:#f0f2f2;border-top:3px solid #fafafa;border-bottom:4px solid #888;box-sizing:border-box;display:flex;align-items:center;justify-content:center}
  .spin svg{width:28px;height:24px}
  .repuesto{width:838px;height:517px;margin-left:42px;background:#000;padding:2px;box-sizing:border-box;flex:none;display:flex;flex-direction:column;gap:3px}
  .rhead{height:54px;flex:none;background:#1573ba;color:#eaf3fa;display:flex;align-items:center;justify-content:center;padding-bottom:4px;box-sizing:border-box}
  .rbody{flex:1;background:#fff;padding:1px 0 0 11px;line-height:46px;white-space:nowrap;color:#1a1a1a}
</style>
